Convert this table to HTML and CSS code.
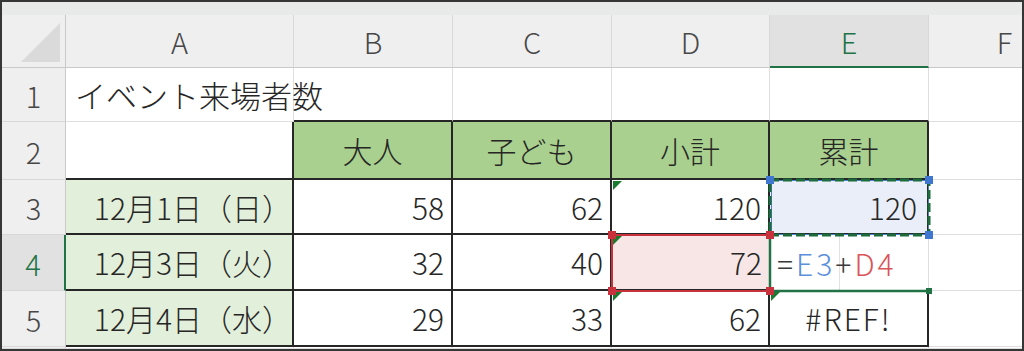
FILE: index.html
```html
<!DOCTYPE html>
<html lang="ja">
<head>
<meta charset="utf-8">
<title>イベント来場者数</title>
<link rel="stylesheet" href="styles.css">
</head>
<body>
<div class="frame">
  <div class="strip"></div>
  <div class="sheet">
    <!-- column headers -->
    <div class="corner">
      <svg width="64" height="53" viewBox="0 0 64 53"><polygon points="19,47 58,47 58,8" fill="#dadada"/></svg>
    </div>
    <div class="ch">A</div>
    <div class="ch">B</div>
    <div class="ch">C</div>
    <div class="ch">D</div>
    <div class="ch sel">E</div>
    <div class="ch">F</div>

    <!-- row 1 -->
    <div class="rh">1</div>
    <div class="c title">イベント来場者数</div>
    <div class="c db"></div>
    <div class="c db"></div>
    <div class="c db"></div>
    <div class="c db"></div>
    <div class="c"></div>

    <!-- row 2 -->
    <div class="rh">2</div>
    <div class="c dr db"></div>
    <div class="c hd dr db">大人</div>
    <div class="c hd dr db">子ども</div>
    <div class="c hd dr db">小計</div>
    <div class="c hd dr db">累計</div>
    <div class="c"></div>

    <!-- row 3 -->
    <div class="rh">3</div>
    <div class="c day dr db">12月1日（日）</div>
    <div class="c num dr db">58</div>
    <div class="c num dr db">62</div>
    <div class="c num dr db err">120</div>
    <div class="c num dr db ref-blue">120</div>
    <div class="c"></div>

    <!-- row 4 -->
    <div class="rh sel">4</div>
    <div class="c day dr db">12月3日（火）</div>
    <div class="c num dr db">32</div>
    <div class="c num dr db">40</div>
    <div class="c num db err ref-red">72</div>
    <div class="c editing"><span class="op">=</span><span class="blue">E3</span><span class="op">+</span><span class="red">D4</span></div>
    <div class="c"></div>

    <!-- row 5 -->
    <div class="rh">5</div>
    <div class="c day dr db">12月4日（水）</div>
    <div class="c num dr db">29</div>
    <div class="c num dr db">33</div>
    <div class="c num dr db err">62</div>
    <div class="c mid dr db err error-value">#REF!</div>
    <div class="c"></div>

    <!-- row 6 (cut off at the bottom edge) -->
    <div class="rh"></div>
    <div class="c"></div>
    <div class="c"></div>
    <div class="c"></div>
    <div class="c err"></div>
    <div class="c err"></div>
    <div class="c"></div>

    <!-- reference highlights, copy marquee and active cell -->
    <svg class="marks" width="1020" height="332" viewBox="0 0 1020 332">
      <rect x="769.5" y="165.5" width="157" height="54" fill="none" stroke="#4a7fd2" stroke-width="1"/>
      <rect x="768" y="165" width="159" height="55" fill="none" stroke="#1d6b3b" stroke-width="3" stroke-dasharray="9 4"/>
      <rect x="610" y="220" width="158" height="56" fill="none" stroke="#c8323c" stroke-width="2"/>
      <line x1="768" y1="221" x2="768" y2="276" stroke="#217346" stroke-width="2.5"/>
      <line x1="768" y1="276" x2="927" y2="276" stroke="#217346" stroke-width="2.5"/>
      <rect x="606" y="216" width="8" height="8" fill="#c8323c"/>
      <rect x="606" y="272" width="8" height="8" fill="#c8323c"/>
      <rect x="764" y="216" width="8" height="8" fill="#c8323c"/>
      <rect x="764" y="272" width="8" height="8" fill="#c8323c"/>
      <rect x="764" y="161" width="8" height="8" fill="#3f76cf"/>
      <rect x="923" y="161" width="8" height="8" fill="#3f76cf"/>
      <rect x="923" y="216" width="8" height="8" fill="#3f76cf"/>
      <rect x="924" y="273" width="6" height="6" fill="#217346"/>
    </svg>
  </div>
</div>
</body>
</html>
```

FILE: styles.css
```css
body {
  margin: 0;
  background: #ffffff;
}

.frame {
  width: 1024px;
  height: 351px;
  box-sizing: border-box;
  border: 2px solid #363636;
  overflow: hidden;
  background: #ffffff;
  font-family: "Noto Sans CJK JP", "Noto Sans", sans-serif;
  font-weight: 300;
}

.strip {
  height: 13px;
  background: #e8eaea;
}

.sheet {
  position: relative;
  display: grid;
  grid-template-columns: 64px 228px 159px 159px 158px 159px 152px;
  grid-template-rows: 53px 54px 58px 55px 56px 56px 2px;
}

.sheet > div {
  box-sizing: border-box;
  overflow: hidden;
  white-space: nowrap;
}

/* headers */
.corner {
  background: #efefef;
  border-right: 1px solid #c9c9c9;
  border-bottom: 1px solid #c9c9c9;
}

.corner svg {
  display: block;
}

.ch,
.rh {
  display: flex;
  align-items: center;
  justify-content: center;
  background: #efefef;
  font-size: 29px;
  color: #474747;
}

.ch {
  border-right: 1px solid #d8d8d8;
  border-bottom: 1px solid #c9c9c9;
}

.rh {
  border-right: 1px solid #c9c9c9;
  border-bottom: 1px solid #d8d8d8;
}

.ch.sel {
  background: #e1e1e1;
  color: #217346;
  border-bottom: 2px solid #217346;
}

.rh.sel {
  background: #e1e1e1;
  color: #217346;
  border-right: 2px solid #217346;
}

/* cells */
.c {
  position: relative;
  display: flex;
  align-items: center;
  padding: 0 7px;
  font-size: 30px;
  color: #262626;
  border-right: 1px solid #dedede;
  border-bottom: 1px solid #dedede;
}

.dr {
  border-right: 2px solid #262626;
}

.db {
  border-bottom: 2px solid #262626;
}

/* long title spills over the empty cell to its right */
.sheet > .title {
  overflow: visible;
  z-index: 1;
  padding-left: 9px;
  font-size: 31px;
}

.num {
  justify-content: flex-end;
}

.mid {
  justify-content: center;
}

.hd {
  justify-content: center;
  background: #a9d08e;
}

.day {
  justify-content: flex-end;
  padding-right: 0;
  background: #e2efda;
}

.ref-blue {
  background: #e9eef8;
  padding-right: 10px;
}

.ref-red {
  background: #f8e6e7;
}

.error-value {
  letter-spacing: 2px;
}

.editing {
  padding-left: 7px;
  letter-spacing: 3px;
  background: linear-gradient(to right, transparent 69px, #e2e2e2 69px, #e2e2e2 70px, transparent 70px);
}

.editing .op {
  color: #3a3a3a;
}

.editing .blue {
  color: #5b8fdc;
}

.editing .red {
  color: #d9555a;
}

/* error indicator in the top-left corner */
.err::before {
  content: "";
  position: absolute;
  left: 1px;
  top: 1px;
  border-top: 9px solid #1a7a2e;
  border-right: 9px solid transparent;
}

.marks {
  position: absolute;
  left: 0;
  top: 0;
  pointer-events: none;
}
```
